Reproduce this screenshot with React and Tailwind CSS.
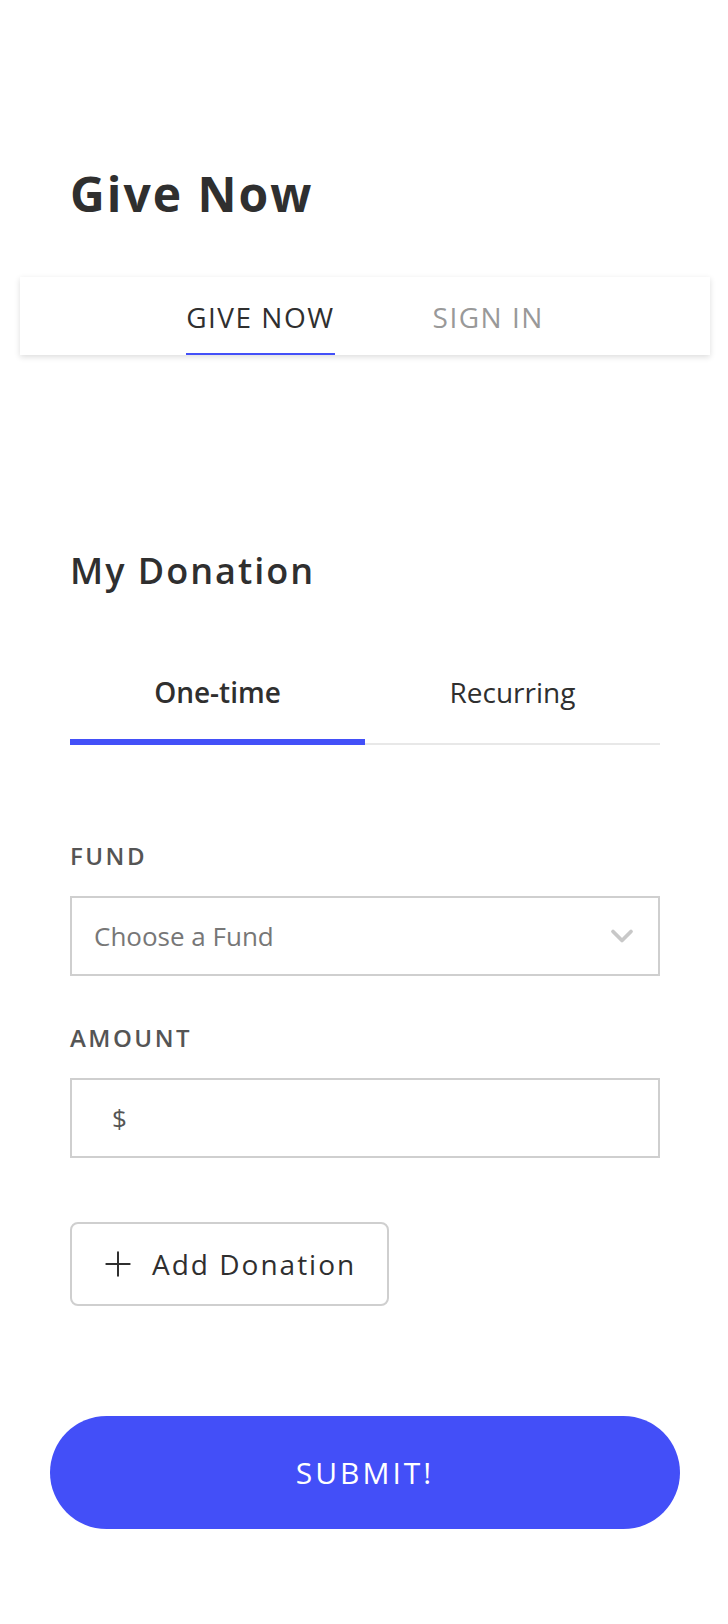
import { ChevronDown, Plus } from "lucide-react";

const FONT = { fontFamily: '"Open Sans", "Noto Sans", sans-serif' };

export default function App() {
  return (
    <div className="min-h-[1624px] bg-white text-[#2f2f2f]" style={FONT}>
      {/* header */}
      <div className="pl-[20px] pr-[18px] pt-[166px]">
        <h1 className="pl-[50px] text-[48px] font-bold leading-[56px] tracking-[2px]">
          Give Now
        </h1>
        <div className="mt-[55px] flex h-[78px] items-end justify-center gap-[98px] bg-white shadow-[0_2px_6px_rgba(0,0,0,0.14)]">
          <button className="h-full border-b-2 border-[#4350f8] pt-[4px] text-[28px] leading-[40px] tracking-[1.5px] text-[#2f2f2f]">
            GIVE NOW
          </button>
          <button className="h-full border-b-2 border-transparent pt-[4px] text-[28px] leading-[40px] tracking-[1.5px] text-[#999]">
            SIGN IN
          </button>
        </div>
      </div>

      {/* donation form */}
      <div className="pl-[70px] pr-[68px] pt-[192px]">
        <h2 className="text-[36px] font-semibold leading-[48px] tracking-[2px]">
          My Donation
        </h2>

        <div className="mt-[77px] grid grid-cols-2 border-b-2 border-[#e8e8e8]">
          <button className="relative pb-[31px] text-[28px] font-semibold leading-[40px]">
            One-time
            <span className="absolute inset-x-0 -bottom-[2px] h-[6px] bg-[#4350f8]" />
          </button>
          <button className="pb-[31px] text-[28px] leading-[40px]">Recurring</button>
        </div>

        <label className="mt-[95px] block text-[24px] font-semibold leading-[32px] tracking-[2.5px] text-[#555]">
          FUND
        </label>
        <div className="mt-[24px] flex h-[80px] items-center justify-between border-2 border-[#cfcfcf] pl-[22px] pr-[18px]">
          <span className="text-[26px] text-[#777]">Choose a Fund</span>
          <ChevronDown className="h-[36px] w-[36px] text-[#c8c8c8]" strokeWidth={2.5} />
        </div>

        <label className="mt-[46px] block text-[24px] font-semibold leading-[32px] tracking-[2.5px] text-[#555]">
          AMOUNT
        </label>
        <div className="mt-[24px] flex h-[80px] items-center border-2 border-[#cfcfcf] pl-[40px]">
          <span className="text-[26px] text-[#555]">$</span>
        </div>

        <button className="mt-[64px] flex h-[84px] items-center gap-[14px] rounded-[8px] border-2 border-[#cfcfcf] pl-[26px] pr-[31px] text-[28px] tracking-[2px]">
          <Plus className="h-[40px] w-[40px]" strokeWidth={1.2} />
          Add Donation
        </button>
      </div>

      <div className="pl-[50px] pr-[48px] pt-[110px]">
        <button className="flex h-[113px] w-full items-center justify-center rounded-full bg-[#434ff8] text-[30px] tracking-[3px] text-white">
          SUBMIT!
        </button>
      </div>
    </div>
  );
}
